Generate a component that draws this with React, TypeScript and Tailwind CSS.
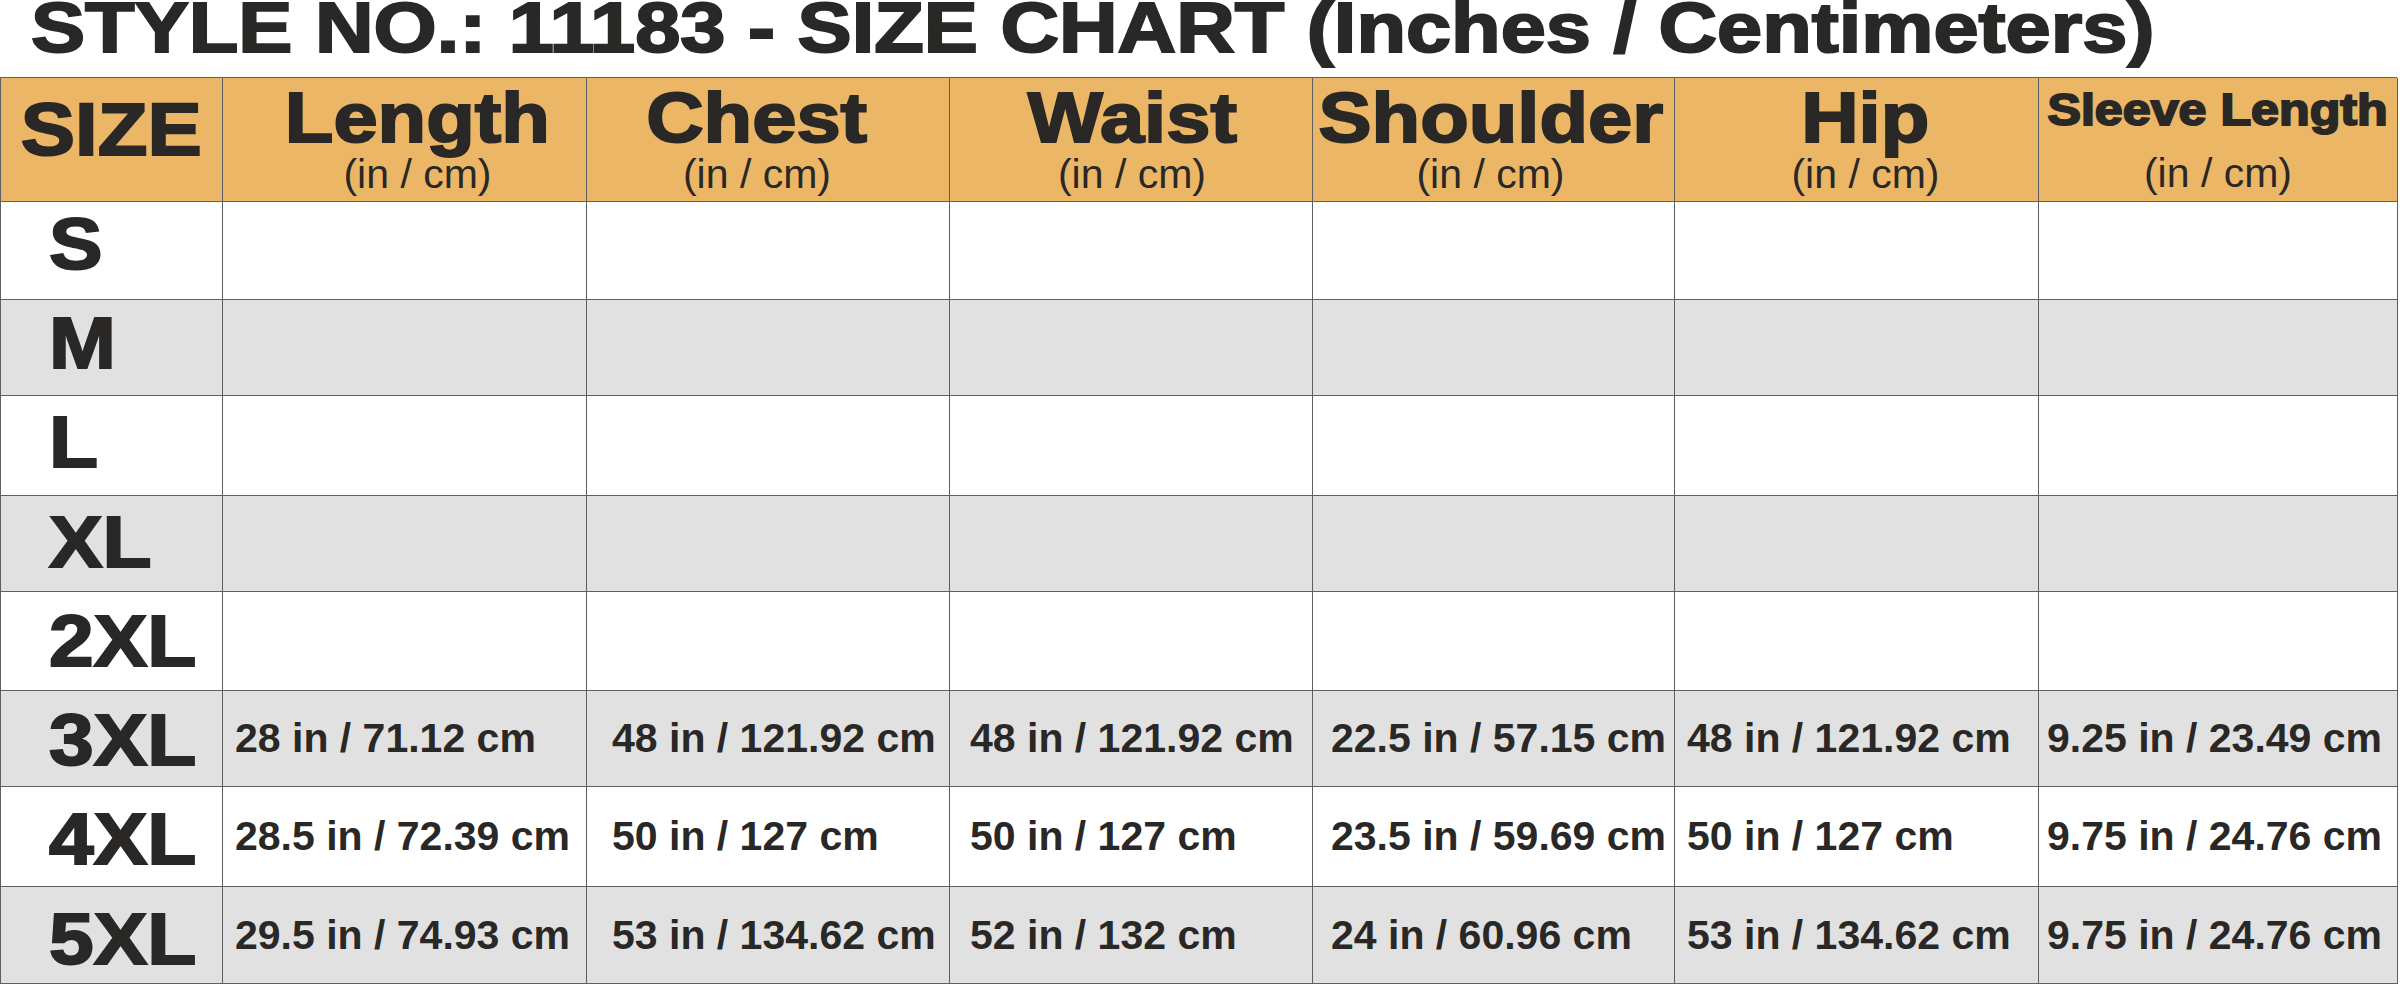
const headers = [
  { label: "Length", small: false, shift: "pl-[26px]" },
  { label: "Chest", small: false, shift: "pr-[22px]" },
  { label: "Waist", small: false, shift: "pl-[2px]" },
  { label: "Shoulder", small: false, shift: "pr-[6px]" },
  { label: "Hip", small: false, shift: "pl-[18px]" },
  { label: "Sleeve Length", small: true, shift: "" },
];

// left padding of the values, per column (the source is not aligned evenly)
const pads = ["pl-[12px]", "pl-[25px]", "pl-[20px]", "pl-[18px]", "pl-[12px]", "pl-[8px]"];

// row heights and size-label nudges, read off the source chart
const rowH = ["h-[98px]", "h-[96px]", "h-[100px]", "h-[96px]", "h-[99px]", "h-[96px]", "h-[100px]", "h-[97px]"];
const nudge = ["pb-[14px]", "pb-[11px]", "pb-[8px]", "pb-[5px]", "pb-[2px]", "pt-[1px]", "pt-[4px]", "pt-[7px]"];

const rows: { size: string; values: string[] }[] = [
  { size: "S", values: ["", "", "", "", "", ""] },
  { size: "M", values: ["", "", "", "", "", ""] },
  { size: "L", values: ["", "", "", "", "", ""] },
  { size: "XL", values: ["", "", "", "", "", ""] },
  { size: "2XL", values: ["", "", "", "", "", ""] },
  {
    size: "3XL",
    values: ["28 in / 71.12 cm", "48 in / 121.92 cm", "48 in / 121.92 cm", "22.5 in / 57.15 cm", "48 in / 121.92 cm", "9.25 in / 23.49 cm"],
  },
  {
    size: "4XL",
    values: ["28.5 in / 72.39 cm", "50 in / 127 cm", "50 in / 127 cm", "23.5 in / 59.69 cm", "50 in / 127 cm", "9.75 in / 24.76 cm"],
  },
  {
    size: "5XL",
    values: ["29.5 in / 74.93 cm", "53 in / 134.62 cm", "52 in / 132 cm", "24 in / 60.96 cm", "53 in / 134.62 cm", "9.75 in / 24.76 cm"],
  },
];

const heavy = "font-bold [-webkit-text-stroke:2px_#2a2826]";

const App = () => {
  return (
    <div className="w-[2400px] h-[985px] overflow-hidden bg-white text-[#2a2826] font-['Liberation_Sans',Arial,sans-serif]">
      {/* ---------- Title ---------- */}
      <div className="h-[77px] pl-[31px]">
        <h1 className={`inline-block origin-left scale-x-[1.159] whitespace-nowrap text-[70px] leading-[56px] ${heavy}`}>
          STYLE NO.: 11183 - SIZE CHART (Inches / Centimeters)
        </h1>
      </div>

      {/* ---------- Chart ---------- */}
      <div className="grid w-[2397px] grid-cols-[222px_364px_363px_363px_362px_364px_359px] border-t border-l border-[#5f5f5f]">
        {/* Header */}
        <div className="h-[124px] bg-[#ebb766] border-r border-b border-[#5f5f5f] pt-[15px] text-center">
          <span className={`inline-block scale-x-[1.1] text-[74px] leading-[74px] ${heavy}`}>SIZE</span>
        </div>
        {headers.map((h) => (
          <div key={h.label} className={`h-[124px] bg-[#ebb766] border-r border-b border-[#5f5f5f] text-center ${h.shift}`}>
            {h.small ? (
              <div className="pt-[9px]">
                <span className={`inline-block scale-x-[1.115] whitespace-nowrap text-[45px] leading-[45px] ${heavy}`}>
                  {h.label}
                </span>
              </div>
            ) : (
              <div className="pt-[10px]">
                <span className={`inline-block scale-x-[1.12] whitespace-nowrap text-[71px] leading-[60px] ${heavy}`}>
                  {h.label}
                </span>
              </div>
            )}
            <div className={`${h.small ? "mt-[21px]" : "mt-[5px]"} text-[41px] leading-[41px] font-normal`}>(in / cm)</div>
          </div>
        ))}

        {/* Rows */}
        {rows.map((r, i) => (
          <div key={r.size} className="contents">
            <div
              className={`flex ${rowH[i]} ${nudge[i]} items-center border-r border-b border-[#5f5f5f] pl-[48px] ${
                i % 2 ? "bg-[#e1e1e1]" : "bg-white"
              }`}
            >
              <span className={`inline-block origin-left scale-x-[1.1] text-[73px] leading-none ${heavy}`}>{r.size}</span>
            </div>
            {r.values.map((v, j) => (
              <div
                key={j}
                className={`flex ${rowH[i]} items-center border-r border-b border-[#5f5f5f] ${pads[j]} whitespace-nowrap text-[41px] leading-none font-bold ${
                  i % 2 ? "bg-[#e1e1e1]" : "bg-white"
                }`}
              >
                {v}
              </div>
            ))}
          </div>
        ))}
      </div>
    </div>
  );
};

export default App;
